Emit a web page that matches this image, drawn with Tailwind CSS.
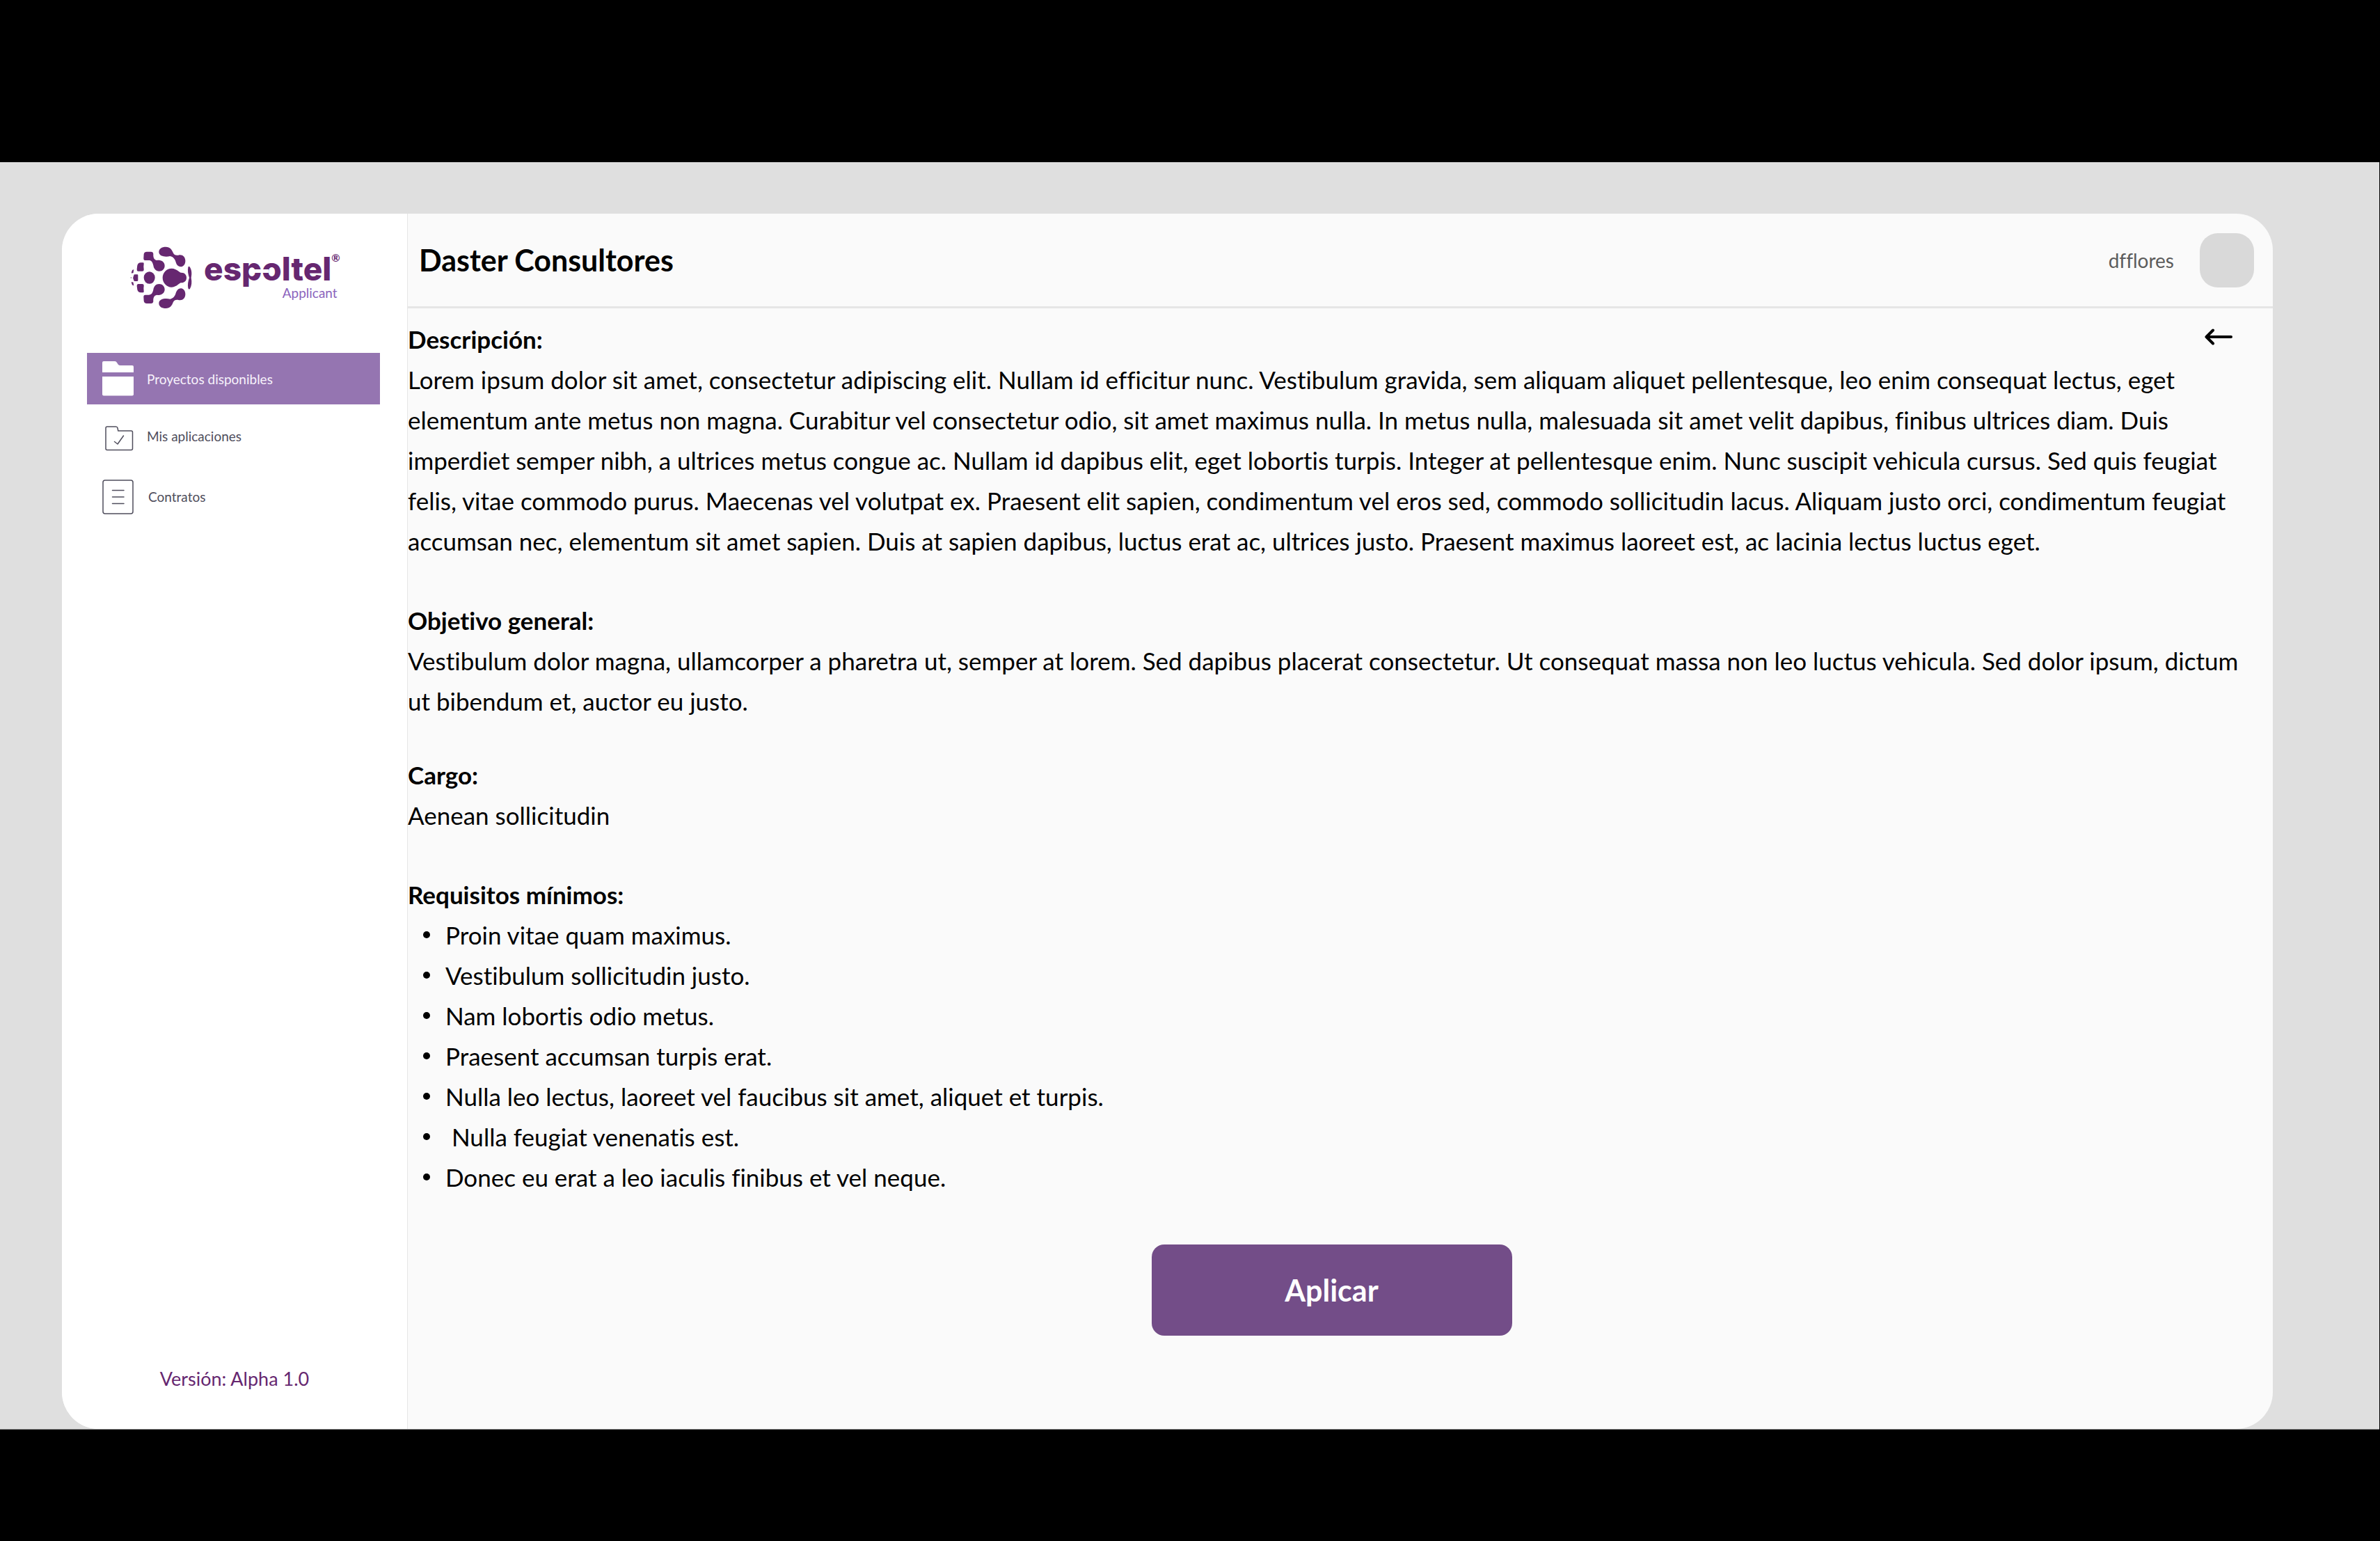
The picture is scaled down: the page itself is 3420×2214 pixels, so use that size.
<!DOCTYPE html>
<html lang="es">
<head>
<meta charset="utf-8">
<meta name="viewport" content="width=device-width, initial-scale=1">
<title>Espoltel Applicant</title>
<script src="https://cdn.jsdelivr.net/npm/@tailwindcss/browser@4"></script>
</head>
<body class="flex min-h-screen flex-col bg-black pt-[233px] pb-[160px] font-['Lato','Noto_Sans',sans-serif] text-black [font-variant-ligatures:none]">
<div class="mr-px flex flex-1 border-b border-[#888888] bg-[#dfdfdf] pt-[74px] pr-[153px] pl-[89px]">
  <div class="flex flex-1 overflow-hidden rounded-[53px] bg-[#fafafa]">

    <!-- Sidebar -->
    <aside class="flex w-[497px] shrink-0 flex-col border-r border-[#e6e6e6] bg-white">
      <div class="flex items-start gap-[16px] pt-[47px] pl-[98px]">
        <svg class="h-[90px] w-[90px]" viewBox="78 70 270 270" fill="#662770" aria-hidden="true">
          <defs>
            <g id="half">
              <path d="M202 94C202 80 214 72 232 72C250 72 258 84 262 95C266 106 274 110 286 108C303 104 315 114 316 131C317 146 308 158 298 158C284 158 278 148 275 138C271 124 264 115 250 112C232 117 202 114 202 94Z"/>
              <path d="M137 104Q138 93 150 93H168Q177 93 178 102C177 116 180 128 194 130C212 126 227 138 227 153C227 167 217 177 203 177C189 177 180 167 178 152C175 138 170 130 158 130H144Q135 130 136 120Z"/>
              <path d="M107 168L109 152Q112 140 124 140H134Q138 140 137 146Q135 158 137 168Q138 177 130 177H112Q106 176 107 168Z"/>
              <path d="M86 175Q87 171 94 170Q92 176 92 183Q91 186 83 185Z"/>
            </g>
          </defs>
          <use href="#half"/>
          <use href="#half" transform="matrix(1 0 0 -1 0 409)"/>
          <ellipse cx="161" cy="205" rx="24" ry="26"/>
          <path d="M257 165C275 165 286 178 296 183C313 182 321 192 321 205C321 218 312 228 296 227C286 232 275 246 257 246C235 246 218 227 218 205C218 183 235 165 257 165Z"/>
          <path d="M94 193Q95 191 98 191H109Q112 191 112 195V216Q112 220 108 220H98Q94 220 94 217Q94 212 91 210V201Q94 199 94 193Z"/>
          <circle cx="82" cy="205" r="2"/>
          <path d="M328 160Q331 153 336 160C343 172 345 185 341 205C345 225 343 240 336 252Q331 258 328 250C325 235 328 220 333 205C328 190 325 175 328 160Z"/>
        </svg>
        <div class="flex flex-col items-end">
          <div class="relative flex items-start pt-[8px]">
            <span class="font-['Inter',sans-serif] text-[46px] leading-[48px] font-extrabold text-[#662770]">espoltel</span>
            <span class="absolute top-[33px] left-[71px] h-[5px] w-[22px] bg-white"></span>
            <span class="text-[15px] leading-[16px] font-bold text-[#662770]">®</span>
          </div>
          <span class="mr-[4px] text-[19px] leading-[22px] text-[#8b63bd]">Applicant</span>
        </div>
      </div>

      <nav class="mt-[63px] mr-[39px] ml-[36px] flex flex-col gap-[11px] text-[19px] text-[#4f4d5c]">
        <a href="#" aria-current="page" class="flex h-[74px] items-center gap-[19px] bg-[#9575b1] pl-[22px] text-[#f7f2fb]">
          <svg class="h-[50px] w-[45px]" viewBox="0 0 45 50" fill="#fff" aria-hidden="true"><path d="M0 2Q0 0 2 0H18Q20 0 21 2L23 5Q24 6 26 6H43Q45 6 45 8V16H0Z"/><path d="M0 22H45V47.500Q45 49.500 43 49.500H2Q0 49.500 0 47.500Z"/></svg>
          <span class="pt-[2px]">Proyectos disponibles</span>
        </a>
        <a href="#" class="flex h-[74px] items-center gap-[19px] pl-[22px]">
          <svg class="h-[50px] w-[45px]" viewBox="0 0 45 50" fill="none" stroke="#4f4d5c" stroke-width="1.500" stroke-linecap="round" stroke-linejoin="round" aria-hidden="true"><path d="M5 11Q5 9 7 9H19.500Q21.500 9 22 11L22.800 15H41.500Q43.500 15 43.500 17V40.500Q43.500 42.500 41.500 42.500H7Q5 42.500 5 40.500Z"/><path d="M17.500 30.500L22 34L30.500 22"/></svg>
          <span class="pb-[3px]">Mis aplicaciones</span>
        </a>
        <a href="#" class="flex h-[74px] items-center gap-[21px] pl-[22px]">
          <svg class="h-[50px] w-[45px]" viewBox="0 0 45 50" fill="none" stroke="#4f4d5c" stroke-width="1.500" stroke-linecap="round" aria-hidden="true"><rect x="1" y="1" width="43" height="48" rx="3"/><path d="M14.500 15.500H31M14.500 25H31M14.500 34.500H31"/></svg>
          <span>Contratos</span>
        </a>
      </nav>

      <p class="mt-auto pb-[56px] text-center text-[27px] leading-8 text-[#662770]">Versión: Alpha 1.0</p>
    </aside>

    <!-- Project detail -->
    <main class="min-w-0 flex-1">
      <header class="flex h-[136px] items-center justify-between border-b-3 border-[#e6e6e6] pr-[27px] pl-[16px]">
        <h1 class="text-[43px] leading-[52px] font-bold">Daster Consultores</h1>
        <div class="flex items-center gap-[37px]">
          <span class="text-[28px] text-[#5c5c5c]">dfflores</span>
          <span class="size-[78px] rounded-[26px] bg-[#d9d9d9]"></span>
        </div>
      </header>

      <div class="pt-[15px] pr-[25px] text-[35px] leading-[58px]">
        <section>
          <div class="flex items-start justify-between">
            <h2 class="font-bold">Descripción:</h2>
            <button type="button" aria-label="Volver" class="mt-[14px] mr-[33px]">
              <svg class="h-[24px] w-[40px]" viewBox="0 0 40 24" fill="none" stroke="#000" stroke-width="4" stroke-linecap="round" stroke-linejoin="round" aria-hidden="true"><path d="M38 12H3M12 2.500L2.500 12L12 21.500"/></svg>
            </button>
          </div>
          <p>Lorem ipsum dolor sit amet, consectetur adipiscing elit. Nullam id efficitur nunc. Vestibulum gravida, sem aliquam aliquet pellentesque, leo enim consequat lectus, eget elementum ante metus non magna. Curabitur vel consectetur odio, sit amet maximus nulla. In metus nulla, malesuada sit amet velit dapibus, finibus ultrices diam. Duis imperdiet semper nibh, a ultrices metus congue ac. Nullam id dapibus elit, eget lobortis turpis. Integer at pellentesque enim. Nunc suscipit vehicula cursus. Sed quis feugiat felis, vitae commodo purus. Maecenas vel volutpat ex. Praesent elit sapien, condimentum vel eros sed, commodo sollicitudin lacus. Aliquam justo orci, condimentum feugiat accumsan nec, elementum sit amet sapien. Duis at sapien dapibus, luctus erat ac, ultrices justo. Praesent maximus laoreet est, ac lacinia lectus luctus eget.</p>
        </section>
        <section class="mt-[56px]">
          <h2 class="font-bold">Objetivo general:</h2>
          <p>Vestibulum dolor magna, ullamcorper a pharetra ut, semper at lorem. Sed dapibus placerat consectetur. Ut consequat massa non leo luctus vehicula. Sed dolor ipsum, dictum ut bibendum et, auctor eu justo.</p>
        </section>
        <section class="mt-[48px]">
          <h2 class="font-bold">Cargo:</h2>
          <p>Aenean sollicitudin</p>
        </section>
        <section class="mt-[56px]">
          <h2 class="font-bold">Requisitos mínimos:</h2>
          <ul class="[&>li]:flex [&>li]:items-center [&>li]:gap-[22px] [&>li]:pl-[22px] [&>li]:before:size-[10px] [&>li]:before:rounded-full [&>li]:before:bg-black">
            <li>Proin vitae quam maximus.</li>
            <li>Vestibulum sollicitudin justo.</li>
            <li>Nam lobortis odio metus.</li>
            <li>Praesent accumsan turpis erat.</li>
            <li>Nulla leo lectus, laoreet vel faucibus sit amet, aliquet et turpis.</li>
            <li>&nbsp;Nulla feugiat venenatis est.</li>
            <li>Donec eu erat a leo iaculis finibus et vel neque.</li>
          </ul>
        </section>
        <div class="mt-[68px] flex justify-center">
          <button type="button" class="h-[131px] w-[518px] rounded-[18px] bg-[#734d88] text-[43px] font-bold text-white">Aplicar</button>
        </div>
      </div>
    </main>
  </div>
</div>
</body>
</html>
